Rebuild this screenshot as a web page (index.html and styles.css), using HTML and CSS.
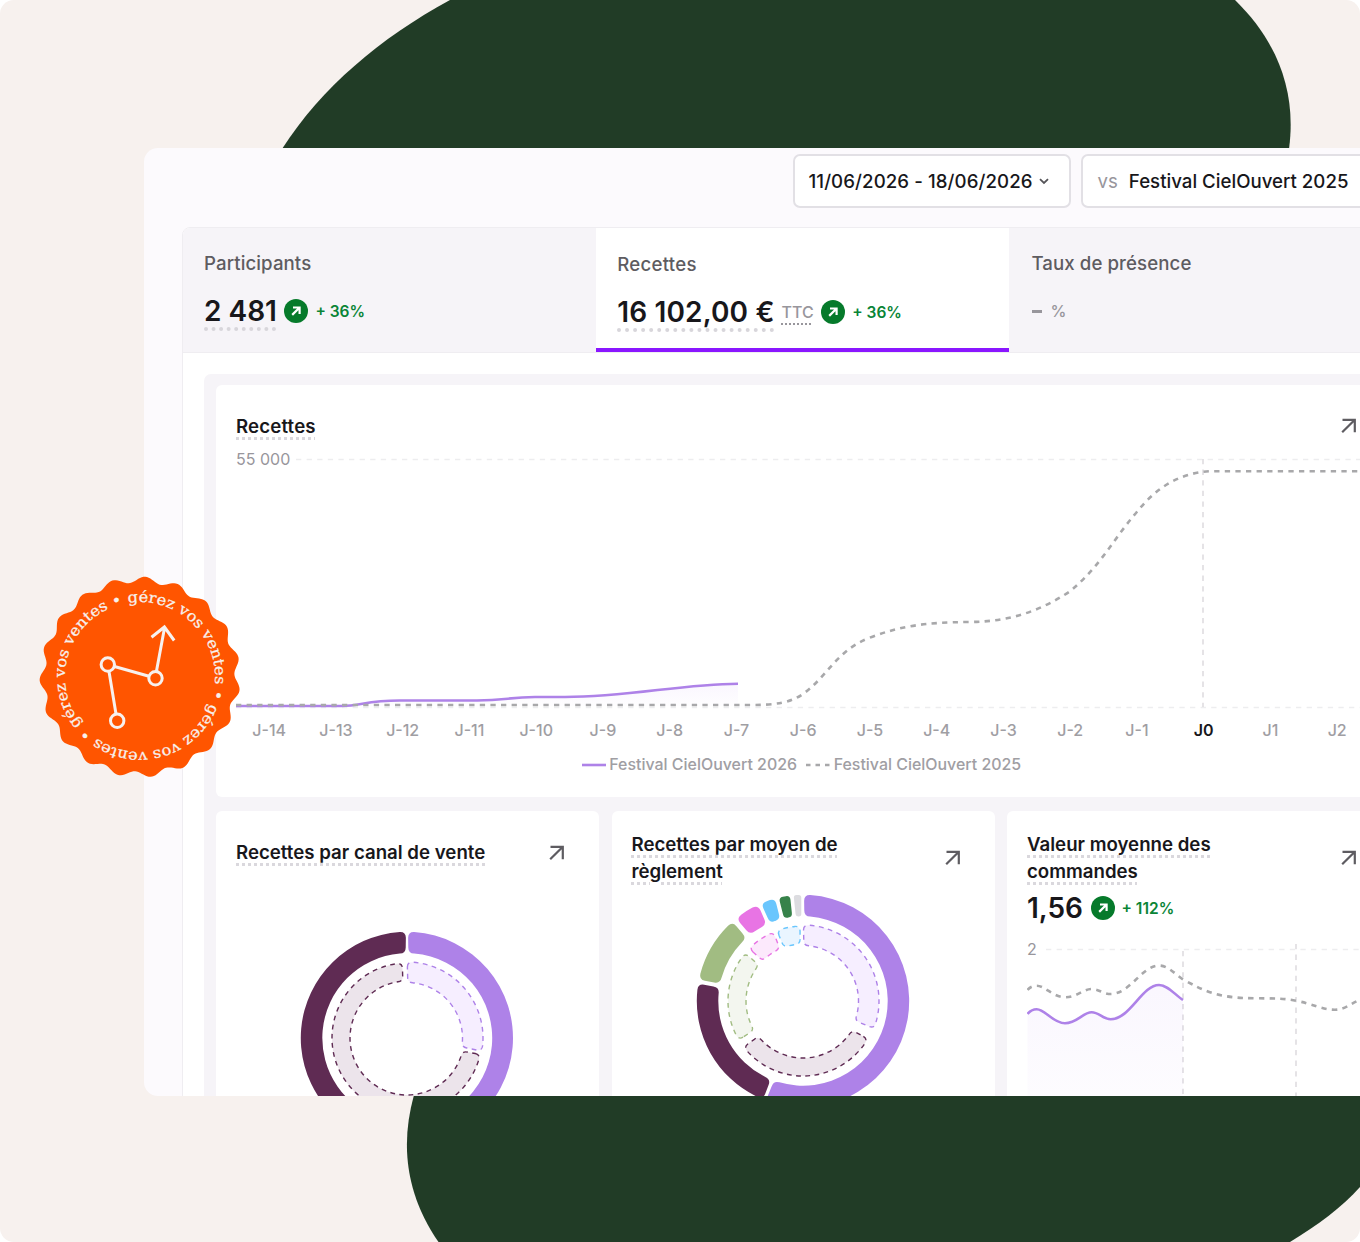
FILE: index.html
```html
<!DOCTYPE html>
<html lang="fr">
<head>
<meta charset="UTF-8">
<meta name="viewport" content="width=device-width, initial-scale=1.0">
<title>Gérez vos ventes</title>
<link rel="stylesheet" href="styles.css">
</head>
<body>
    <div class="hero">
        <svg class="shapes" width="1360" height="1242" viewBox="0 0 1360 1242">
            <path d="M450 0C380 38 321 88 282 149H1289C1297 90 1276 40 1235 0Z"/>
            <path d="M414 1095C400 1145 406 1195 438.5 1242H1290C1318 1225 1342 1207 1360 1187V1095Z"/>
        </svg>

        <div class="dashboard">
            <div class="toolbar">
                <div class="select select-dates">
                    11/06/2026 - 18/06/2026
                    <svg width="10" height="7" viewBox="0 0 10 7"><path d="M1 1.2l4 3.8 4-3.8"/></svg>
                </div>
                <div class="select select-compare"><span class="vs">vs</span>Festival CielOuvert 2025</div>
            </div>

            <div class="panel">
                <div class="tabs">
                    <div class="tab">
                        <div class="tab-label">Participants</div>
                        <div class="stat">
                            <span class="number">2 481</span>
                            <svg class="trend" viewBox="0 0 24 24"><circle cx="12" cy="12" r="12"/><path d="M9 8.5h6.6v6.6M15.6 8.5L8.2 15.9"/></svg>
                            <span class="delta">+ 36%</span>
                        </div>
                    </div>
                    <div class="tab active">
                        <div class="tab-label">Recettes</div>
                        <div class="stat">
                            <span class="number wide">16 102,00 €</span>
                            <span class="ttc">TTC</span>
                            <svg class="trend" viewBox="0 0 24 24"><circle cx="12" cy="12" r="12"/><path d="M9 8.5h6.6v6.6M15.6 8.5L8.2 15.9"/></svg>
                            <span class="delta">+ 36%</span>
                        </div>
                    </div>
                    <div class="tab">
                        <div class="tab-label">Taux de présence</div>
                        <div class="stat empty"><span class="dash"></span>%</div>
                    </div>
                </div>

                <div class="board">
                    <div class="card card-main">
                        <div class="card-head">
                            <h2><span>Recettes</span></h2>
                            <svg class="open" viewBox="0 0 16 16"><path d="M1.5 1.8h12.3v12.5M13.8 1.8L1.2 14.3"/></svg>
                        </div>
                        <svg class="chart" width="1124" height="268" viewBox="236 445 1124 268">
                            <defs>
                                <linearGradient id="fade" x1="0" y1="0" x2="0" y2="1">
                                    <stop offset="0" stop-color="#a974f0" stop-opacity=".06"/>
                                    <stop offset="1" stop-color="#a974f0" stop-opacity=".01"/>
                                </linearGradient>
                            </defs>
                            <text class="axis" x="236" y="464.5">55 000</text>
                            <path class="grid" d="M296 459.5H1360M236 707.5H1360"/>
                            <path class="grid marker" d="M1203 459V707"/>
                            <path fill="url(#fade)" d="M236 706H341C362 706 365 700.5 400 700.5H477C505 700.5 510 697 535 697H565C630 697 680 684 738 683.7V706Z"/>
                            <path class="current" d="M236 706H341C362 706 365 700.5 400 700.5H477C505 700.5 510 697 535 697H565C630 697 680 684 738 683.7"/>
                            <path class="previous" d="M236 705H750C775 705 790 703 803 694C828 676 836 651 869 638C900 626 925 622.3 970 622C1010 621.5 1040 611 1069 592C1100 567 1112 541 1136 513C1155 489 1178 473 1210 471.2H1360"/>
                        </svg>
                        <div class="days">
                            <span>J-14</span><span>J-13</span><span>J-12</span><span>J-11</span><span>J-10</span><span>J-9</span><span>J-8</span><span>J-7</span><span>J-6</span><span>J-5</span><span>J-4</span><span>J-3</span><span>J-2</span><span>J-1</span><span class="today">J0</span><span>J1</span><span>J2</span>
                        </div>
                        <div class="legend">
                            <svg width="24" height="4"><path class="current" d="M0 2H24"/></svg>
                            <span>Festival CielOuvert 2026</span>
                            <svg class="second" width="24" height="4"><path class="previous short" d="M0 2H24"/></svg>
                            <span>Festival CielOuvert 2025</span>
                        </div>
                    </div>

                    <div class="row">
                        <div class="card">
                            <div class="card-head single">
                                <h2><span>Recettes par canal de vente</span></h2>
                                <svg class="open" viewBox="0 0 16 16"><path d="M1.5 1.8h12.3v12.5M13.8 1.8L1.2 14.3"/></svg>
                            </div>
                            <svg class="donut donut-canal" id="canal" width="216" height="216" viewBox="-108 -108 216 216"></svg>
                        </div>
                        <div class="card">
                            <div class="card-head">
                                <h2><span>Recettes par moyen de règlement</span></h2>
                                <svg class="open" viewBox="0 0 16 16"><path d="M1.5 1.8h12.3v12.5M13.8 1.8L1.2 14.3"/></svg>
                            </div>
                            <svg class="donut" id="reglement" width="216" height="216" viewBox="-108 -108 216 216"></svg>
                        </div>
                        <div class="card">
                            <div class="card-head">
                                <h2><span>Valeur moyenne des commandes</span></h2>
                                <svg class="open" viewBox="0 0 16 16"><path d="M1.5 1.8h12.3v12.5M13.8 1.8L1.2 14.3"/></svg>
                            </div>
                            <div class="stat">
                                <span class="number plain">1,56</span>
                                <svg class="trend" viewBox="0 0 24 24"><circle cx="12" cy="12" r="12"/><path d="M9 8.5h6.6v6.6M15.6 8.5L8.2 15.9"/></svg>
                                <span class="delta">+ 112%</span>
                            </div>
                            <svg class="chart" width="333" height="170" viewBox="1027 930 333 170">
                                <text class="axis" x="1027" y="955">2</text>
                                <path class="grid" d="M1046 949.5H1360"/>
                                <path class="grid marker" d="M1183 951V1100M1296 944V1100"/>
                                <path fill="url(#fade)" d="M1027.5 1014C1030 1011 1033 1009.3 1036.7 1009.3C1045 1009.3 1053 1023.3 1065 1023.3C1077 1023.3 1083 1012.3 1091.7 1012.3C1099 1012.3 1103 1019.3 1110.7 1019.3C1130 1019.3 1142 985 1159 985C1168 985 1175 995 1183 1000V1130H1027.5Z"/>
                                <path class="current" d="M1027.5 1014C1030 1011 1033 1009.3 1036.7 1009.3C1045 1009.3 1053 1023.3 1065 1023.3C1077 1023.3 1083 1012.3 1091.7 1012.3C1099 1012.3 1103 1019.3 1110.7 1019.3C1130 1019.3 1142 985 1159 985C1168 985 1175 995 1183 1000"/>
                                <path class="previous" d="M1027.5 990C1030 987 1033 985.7 1036.7 985.7C1045 985.7 1053 997.3 1065 997.3C1077 997.3 1083 989 1091.7 989C1099 989 1103 994 1110.7 994C1130 994 1142 965.5 1159 965.5C1168 965.5 1175 974 1183 979.5C1205 991 1216 998 1255 998.3C1275 998.3 1285 998.5 1296 1000.7C1313 1004 1322 1009.7 1335 1009.7C1345 1009.7 1350 1004 1360 999.7"/>
                            </svg>
                        </div>
                    </div>
                </div>
            </div>
        </div>

        <svg class="badge" width="204" height="204" viewBox="-102 -102 204 204">
            <path id="seal" fill="#ff5500"/>
            <path id="ring" fill="none" d="M-11.8 -74.1A75 75 0 0 1 11.8 74.1A75 75 0 0 1 -11.8 -74.1"/>
            <text class="badge-text"><textPath href="#ring" textLength="465" lengthAdjust="spacingAndGlyphs">gérez vos ventes • gérez vos ventes • gérez vos ventes •</textPath></text>
            <g class="badge-icon">
                <path d="M-31 -5.5L-24 37M-25.5 -10.5L9 -.8M16.4 -5.5L24.4 -48.5M11.5 -39.8L24.4 -50L34.2 -36.5"/>
                <circle cx="-32.2" cy="-12.5" r="6.7"/>
                <circle cx="15.5" cy="1.2" r="6.7"/>
                <circle cx="-22.8" cy="43.8" r="6.7"/>
            </g>
        </svg>
    </div>

    <script>
        var colors = {
            purple: ['#ae82e8', '#f6eeff'],
            plum: ['#5f2b53', '#ece4eb'],
            olive: ['#a1bc82', '#f3f6ef'],
            pink: ['#e874e4', '#fce9fc'],
            blue: ['#6ac6fd', '#eaf5ff'],
            green: ['#37824a', '#e8f3ea'],
            grey: ['#dcdce0', '#f4f4f6']
        };

        // angles in degrees, clockwise from the top
        function point(r, a) {
            return (r * Math.sin(a)).toFixed(2) + ' ' + (-r * Math.cos(a)).toFixed(2);
        }

        function slice(from, to, r0, r1, c) {
            var a = from * Math.PI / 180, b = to * Math.PI / 180;
            var pad = 1.2;
            var ao = a + pad / r1, bo = b - pad / r1;
            var ai = a + pad / r0, bi = b - pad / r0;
            c = Math.min(c, (bi - ai) * r0 / 2.1);
            var ro = c / r1, ri = c / r0;
            var large = b - a > Math.PI ? 1 : 0;
            return 'M' + point(r1 - c, ao) + 'Q' + point(r1, ao) + ' ' + point(r1, ao + ro) +
                'A' + r1 + ' ' + r1 + ' 0 ' + large + ' 1 ' + point(r1, bo - ro) +
                'Q' + point(r1, bo) + ' ' + point(r1 - c, bo) +
                'L' + point(r0 + c, bi) + 'Q' + point(r0, bi) + ' ' + point(r0, bi - ri) +
                'A' + r0 + ' ' + r0 + ' 0 ' + large + ' 0 ' + point(r0, ai + ri) +
                'Q' + point(r0, ai) + ' ' + point(r0 + c, ai) + 'Z';
        }

        function addSlice(id, name, from, to, inner) {
            var path = document.createElementNS('http://www.w3.org/2000/svg', 'path');
            var wide = name === 'purple';
            if (inner) {
                path.setAttribute('d', slice(from, to, wide ? 55.5 : 57, wide ? 76 : 75, 5));
                path.setAttribute('fill', colors[name][1]);
                path.setAttribute('stroke', colors[name][0]);
                path.setAttribute('class', 'inner');
            } else {
                path.setAttribute('d', slice(from, to, 84.7, 106.2, 6));
                path.setAttribute('fill', colors[name][0]);
            }
            document.getElementById(id).appendChild(path);
        }

        addSlice('canal', 'purple', 0, 190);
        addSlice('canal', 'plum', 190, 360);
        addSlice('canal', 'purple', -0.6, 100.7, true);
        addSlice('canal', 'plum', 101.9, 357.2, true);

        addSlice('reglement', 'purple', 0, 201);
        addSlice('reglement', 'plum', 201.5, 280);
        addSlice('reglement', 'olive', 281, 319);
        addSlice('reglement', 'pink', 320.5, 335.5);
        addSlice('reglement', 'blue', 336.2, 345.3);
        addSlice('reglement', 'green', 346.2, 353.6);
        addSlice('reglement', 'grey', 354.3, 359.7);
        addSlice('reglement', 'purple', -0.5, 112, true);
        addSlice('reglement', 'plum', 119.5, 233, true);
        addSlice('reglement', 'olive', 238, 310.5, true);
        addSlice('reglement', 'pink', 313.5, 337.5, true);
        addSlice('reglement', 'blue', 339, 358.5, true);

        // scalloped edge of the badge
        var d = '';
        for (var i = 0; i < 360; i++) {
            var t = i * Math.PI / 180;
            d += (i ? 'L' : 'M') + point(97.4 + 3 * Math.cos(19 * (t - 0.052)), t);
        }
        document.getElementById('seal').setAttribute('d', d + 'Z');
    </script>
</body>
</html>
```
FILE: styles.css
```css
body {
    margin: 0;
    background: #fff;
    font-family: Inter, "Liberation Sans", sans-serif;
    color: #18171b;
}

.hero {
    position: relative;
    width: 1360px;
    height: 1242px;
    padding: 148px 0 0 144px;
    box-sizing: border-box;
    background: #f7f1ee;
    border-radius: 14px;
    overflow: hidden;
}

.shapes {
    position: absolute;
    top: 0;
    left: 0;
    fill: #213c26;
}

.dashboard {
    position: relative;
    width: 1216px;
    height: 948px;
    background: #fcfafd;
    border-radius: 14px 0 0 14px;
    overflow: hidden;
}

.toolbar {
    display: flex;
    gap: 10px;
    padding: 6px 0 19px 648.5px;
}

.select {
    display: flex;
    align-items: center;
    flex-shrink: 0;
    box-sizing: border-box;
    width: 278.5px;
    height: 54px;
    padding: 0 15px;
    border: 2px solid #e2e0e5;
    border-radius: 7px;
    background: #fff;
    font-size: 18.67px;
    font-weight: 500;
    white-space: nowrap;
}

.select-dates {
    padding-left: 14px;
    letter-spacing: 0.08px;
}

.select svg {
    margin-left: 6px;
    fill: none;
    stroke: #555458;
    stroke-width: 1.8;
}

.select-compare {
    width: 320px;
    padding-left: 14.5px;
}

.vs {
    margin-right: 11px;
    font-weight: 400;
    color: #98969c;
}

.panel {
    width: 1300px;
    margin-left: 38px;
    border: 1px solid #efedf1;
    border-radius: 8px 0 0 0;
    background: #fff;
    overflow: hidden;
}

.tabs {
    display: flex;
    height: 125px;
    background: #f6f4f8;
    border-bottom: 1px solid #efedf1;
    box-sizing: border-box;
}

.tab {
    width: 413.2px;
    padding: 22px 21px 0;
    box-sizing: border-box;
}

.tab:last-child {
    padding-left: 22px;
}

.tab.active {
    background: #fff;
    border-bottom: 4px solid #8a16ff;
}

.tab-label {
    font-size: 18.67px;
    font-weight: 500;
    line-height: 28px;
    letter-spacing: 0.08px;
    color: #5e5c61;
}

.tab .stat {
    margin-top: 13px;
}

.tab.active .tab-label {
    padding-top: 1px;
    letter-spacing: 0.25px;
}

.stat {
    display: flex;
    align-items: center;
    height: 40px;
}

.number {
    font-size: 28px;
    font-weight: 600;
    white-space: nowrap;
    text-decoration: underline dotted #d8d6db 4.4px;
    text-underline-offset: 5.5px;
}

.number.wide {
    letter-spacing: 0.15px;
}

.number.plain {
    text-decoration: none;
}

.ttc {
    margin-left: 7px;
    font-size: 16px;
    font-weight: 500;
    color: #98969c;
    text-decoration: underline dotted #98969c 2.4px;
    text-underline-offset: 4.5px;
}

.trend {
    width: 24px;
    height: 24px;
    margin: 0 7px 0 7.5px;
    fill: #067a2b;
}

.trend path {
    fill: none;
    stroke: #fff;
    stroke-width: 2.2;
}

.delta {
    font-size: 15.5px;
    font-weight: 600;
    color: #0a8537;
}

.empty {
    gap: 8px;
    font-size: 16px;
    font-weight: 500;
    color: #98969c;
}

.dash {
    width: 10px;
    height: 3px;
    margin-left: 1px;
    background: #98969c;
}

.board {
    margin: 20.5px 0 0 21px;
    padding: 11.5px 12px;
    border-radius: 7px 0 0 0;
    background: #f6f4f8;
}

.card {
    box-sizing: border-box;
    width: 383px;
    height: 400px;
    padding: 20px;
    border-radius: 6px;
    background: #fff;
}

.card-main {
    width: 1164px;
    height: 412px;
    margin-bottom: 14px;
}

.row {
    display: flex;
    gap: 12.5px;
    width: 1180px;
}

.card-head {
    display: flex;
    justify-content: space-between;
    align-items: center;
    height: 53px;
    padding-right: 13.5px;
}

.card-main .card-head {
    height: 42px;
    margin-bottom: -2px;
    padding-right: 3px;
}

.card-head.single {
    height: 43px;
    padding-right: 14px;
}

h2 {
    width: 260px;
    margin: 2px 0 0;
    font-size: 18.67px;
    font-weight: 600;
    line-height: 26.5px;
}

.card-main h2 {
    letter-spacing: 0.15px;
}

h2 span {
    text-decoration: underline dotted #dad8dd 3px;
    text-underline-offset: 4px;
}

.open {
    width: 16px;
    height: 16px;
    fill: none;
    stroke: #5e5c61;
    stroke-width: 2.2;
}

.chart {
    display: block;
}

.axis {
    font-size: 16px;
    fill: #98969c;
}

.grid {
    fill: none;
    stroke: #ededef;
    stroke-width: 1.5;
    stroke-dasharray: 5.3 5.3;
}

.marker {
    stroke: #dddade;
}

.current {
    fill: none;
    stroke: #ae82e8;
    stroke-width: 2.6;
}

.previous {
    fill: none;
    stroke: #a8a8aa;
    stroke-width: 2.6;
    stroke-dasharray: 5.3 5.3;
}

.previous.short {
    stroke-dasharray: 4.5 5;
}

.days {
    display: flex;
    margin: 5px 0 0 -0.2px;
    font-size: 16px;
    font-weight: 500;
    line-height: 24px;
    color: #a09ea3;
}

.days span {
    width: 66.75px;
    text-align: center;
    flex-shrink: 0;
}

.days .today {
    font-weight: 600;
    color: #18171b;
}

.legend {
    display: flex;
    align-items: center;
    gap: 3.3px;
    margin: 11px 0 0 346px;
    font-size: 15.95px;
    font-weight: 500;
    line-height: 24px;
    color: #a09ea3;
}

.legend .second {
    margin-left: 6px;
}

.donut {
    display: block;
    margin: 8.5px 0 0 63.5px;
}

.donut-canal {
    margin: 55.5px 0 0 63px;
}

.card .stat {
    margin-top: 4px;
}

.card .stat + .chart {
    margin-top: 2px;
}

.inner {
    stroke-width: 1.4;
    stroke-dasharray: 4.8 4.4;
}

.badge {
    position: absolute;
    top: 574.5px;
    left: 37.5px;
}

.badge-text {
    font-family: "DejaVu Serif", serif;
    font-size: 15px;
    fill: #f7f1ee;
    stroke: #f7f1ee;
    stroke-width: 0.25;
}

.badge-icon {
    fill: none;
    stroke: #f7f1ee;
    stroke-width: 3;
}
```
